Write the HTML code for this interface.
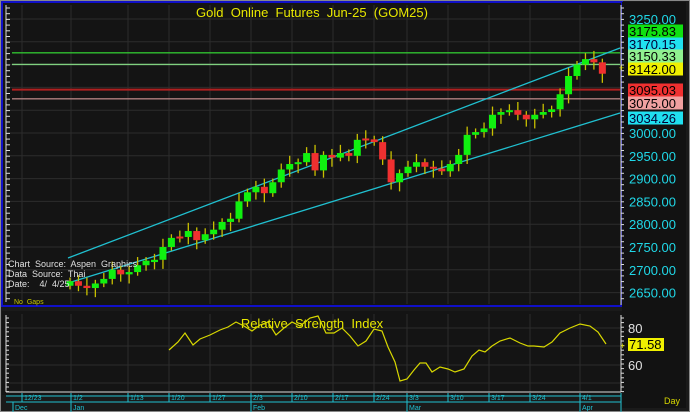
<!DOCTYPE html><html><head><meta charset="utf-8"><style>
html,body{margin:0;padding:0;background:#1c1c1c;width:690px;height:412px;overflow:hidden;font-family:"Liberation Sans",sans-serif}
text{white-space:pre}
</style></head><body>
<svg id="s" width="690" height="412" xmlns="http://www.w3.org/2000/svg" font-family="Liberation Sans, sans-serif" xml:space="preserve">
<rect width="690" height="412" fill="#1a1a1a"/>
<rect x="0" y="0" width="690" height="412" fill="none" stroke="#888" stroke-width="2"/>
<rect x="2" y="2" width="620" height="304" fill="#141414" stroke="#1010c8" stroke-width="2"/>
<rect x="2" y="311" width="620" height="84" fill="#141414"/>
<rect x="622" y="2" width="64" height="406" fill="#121212"/>
<g id="grid" stroke="#2c2c2c" stroke-width="1"></g>
<g id="hl"></g>
<line x1="68" y1="258" x2="620" y2="48" stroke="#20c0d0" stroke-width="1.3"/>
<line x1="68" y1="283" x2="620" y2="113" stroke="#20c0d0" stroke-width="1.3"/>
<g id="c"></g>
<text x="312" y="17" fill="#e8e800" font-size="13" text-anchor="middle">Gold  Online  Futures  Jun-25  (GOM25)</text>
<g fill="#e0e0e0" font-size="9"><text x="8" y="267">Chart  Source:  Aspen  Graphics</text><text x="8" y="277">Data  Source:  Thai</text><text x="8" y="287">Date:    4/  4/25</text></g>
<text x="14" y="304" fill="#c8c800" font-size="7">No  Gaps</text>
<line x1="6" y1="5" x2="6" y2="302" stroke="#ddd"/>
<line x1="6" y1="315" x2="6" y2="392" stroke="#ddd"/>
<line x1="621" y1="5" x2="621" y2="305" stroke="#ddd"/>
<line x1="621" y1="315" x2="621" y2="392" stroke="#ddd"/>
<line x1="6" y1="392" x2="621" y2="392" stroke="#ddd"/>
<g id="ax"></g>
<text x="312" y="328" fill="#e8e800" font-size="13" text-anchor="middle">Relative  Strength  Index</text>
<polyline fill="none" stroke="#d8d800" stroke-width="1.2" points="169,350 178,342 185,333 193,345 200,339 210,335 220,330 228,327 236,322 244,326 252,331 260,325 268,322 276,335 284,328 292,322 300,326 310,318 318,316 326,333 334,333 342,328 350,336 358,346 366,341 374,329 382,331 388,347 395,362 400,381 407,379 414,370 420,363 426,363 432,372 440,367 448,369 455,372 464,369 472,356 479,350 485,352 492,346 500,341 510,338 520,343 528,346 534,346 544,347 552,342 560,333 570,328 580,324 590,326 598,332 606,344"/>
<g id="lab" font-size="13"></g>
<text x="664" y="404" fill="#d8d800" font-size="9">Day</text>
</svg>
<script>
const NS="http://www.w3.org/2000/svg";
function el(p,t,a,txt){const e=document.createElementNS(NS,t);for(const k in a)e.setAttribute(k,a[k]);if(txt!==undefined)e.textContent=txt;document.getElementById(p).appendChild(e);return e;}
const Y=p=>133-(p-3000)*0.456;
const dx=[22,71,128,169,210,251,292,333,374,407,448,489,530,580];
const dl=["12/23","1/2","1/13","1/20","1/27","2/3","2/10","2/17","2/24","3/3","3/10","3/17","3/24","4/1"];
dx.forEach(x=>{el("grid","line",{x1:x,y1:5,x2:x,y2:304});el("grid","line",{x1:x,y1:314,x2:x,y2:392});});
for(let p=2650;p<=3250;p+=50){el("grid","line",{x1:6,y1:Y(p),x2:620,y2:Y(p)});}
[328,346,365,383].forEach(y=>el("grid","line",{x1:6,y1:y,x2:620,y2:y}));
[[3175.83,"#30c030"],[3150.33,"#80d080"],[3095.03,"#b02020"],[3075,"#b08080"]].forEach(([p,c])=>el("hl","line",{x1:12,y1:Y(p),x2:620,y2:Y(p),stroke:c,"stroke-width":p>3090&&p<3100?2:1.3}));
const cl=[2675,2665,2660,2670,2680,2700,2690,2695,2710,2720,2722,2750,2770,2772,2785,2765,2778,2788,2805,2812,2850,2870,2882,2868,2892,2920,2932,2936,2956,2918,2952,2946,2956,2950,2985,2986,2980,2942,2892,2912,2926,2936,2926,2922,2916,2932,2952,2996,3002,3010,3040,3046,3050,3040,3030,3040,3046,3052,3085,3125,3150,3162,3155,3130];
let prev=2665;
cl.forEach((c,i)=>{const x=70+i*8.45;const o=prev+(Math.abs(c-prev)<4?(i%2?3:-3):0);const up=c>=o;
const hi=Math.max(o,c)+8+(i%3)*5,lo=Math.min(o,c)-8-(i%4)*4;
el("c","line",{x1:x,y1:Y(hi),x2:x,y2:Y(lo),stroke:"#c8c000","stroke-width":1.3});
const t=Y(Math.max(o,c)),b=Y(Math.min(o,c));
el("c","rect",{x:x-3.5,y:t,width:7,height:Math.max(2,b-t),fill:up?"#10f010":"#f03030"});prev=c;});
for(let y=8;y<304;y+=5.7)el("ax","line",{x1:621,y1:y,x2:624,y2:y,stroke:"#ddd"});
for(let y=8;y<304;y+=5.7)el("ax","line",{x1:6,y1:y,x2:10,y2:y,stroke:"#ddd"});
for(let y=318;y<392;y+=4.6){el("ax","line",{x1:621,y1:y,x2:624,y2:y,stroke:"#ddd"});el("ax","line",{x1:6,y1:y,x2:9,y2:y,stroke:"#ddd"});}
el("ax","line",{x1:6,y1:396,x2:621,y2:396,stroke:"#20c0d0"});
el("ax","line",{x1:6,y1:402,x2:621,y2:402,stroke:"#20c0d0"});
dx.forEach((x,i)=>{el("ax","line",{x1:x,y1:393,x2:x,y2:402,stroke:"#20c0d0"});el("ax","text",{x:x+2,y:400,fill:"#20c0d0","font-size":7},dl[i]);});
[[13,"Dec"],[71,"Jan"],[251,"Feb"],[407,"Mar"],[580,"Apr"]].forEach(([x,t])=>{el("ax","line",{x1:x,y1:402,x2:x,y2:412,stroke:"#20c0d0"});el("ax","text",{x:x+2,y:410,fill:"#20c0d0","font-size":7},t);});
el("ax","line",{x1:621,y1:393,x2:621,y2:412,stroke:"#20c0d0"});
const L=[[3250,null,"#20d8e8"],[3175.83,"#10e010","#000"],[3170.15,"#20e0f0","#003"],[3150.33,"#90f090","#000"],[3142,"#f0f000","#000"],[3095.03,"#f03030","#000"],[3075,"#f0a0a0","#000"],[3034.26,"#20e0f0","#003"],[3000,null,"#20d8e8"]];
const LY=[19,31,44,56,69,90,103,118,133];
L.forEach(([p,bg,fg],i)=>{const y=LY[i];if(bg)el("lab","rect",{x:628,y:y-6.5,width:55,height:13,fill:bg});el("lab","text",{x:629,y:y+5,fill:fg},p.toFixed(2));});
[2950,2900,2850,2800,2750,2700,2650].forEach(p=>el("lab","text",{x:629,y:Y(p)+5,fill:"#20d8e8"},p.toFixed(2)));
el("lab","text",{x:628,y:333,fill:"#e0e0e0"},"80");
el("lab","text",{x:628,y:370,fill:"#e0e0e0"},"60");
el("lab","rect",{x:628,y:338,width:36,height:13,fill:"#f0f000"});
el("lab","text",{x:629,y:349,fill:"#000"},"71.58");
el("lab","text",{x:620,y:349,fill:"#d8d800","font-size":9},"+");
el("lab","text",{x:619,y:71,fill:"#d8d800","font-size":9},"+");
</script>
</body></html>
